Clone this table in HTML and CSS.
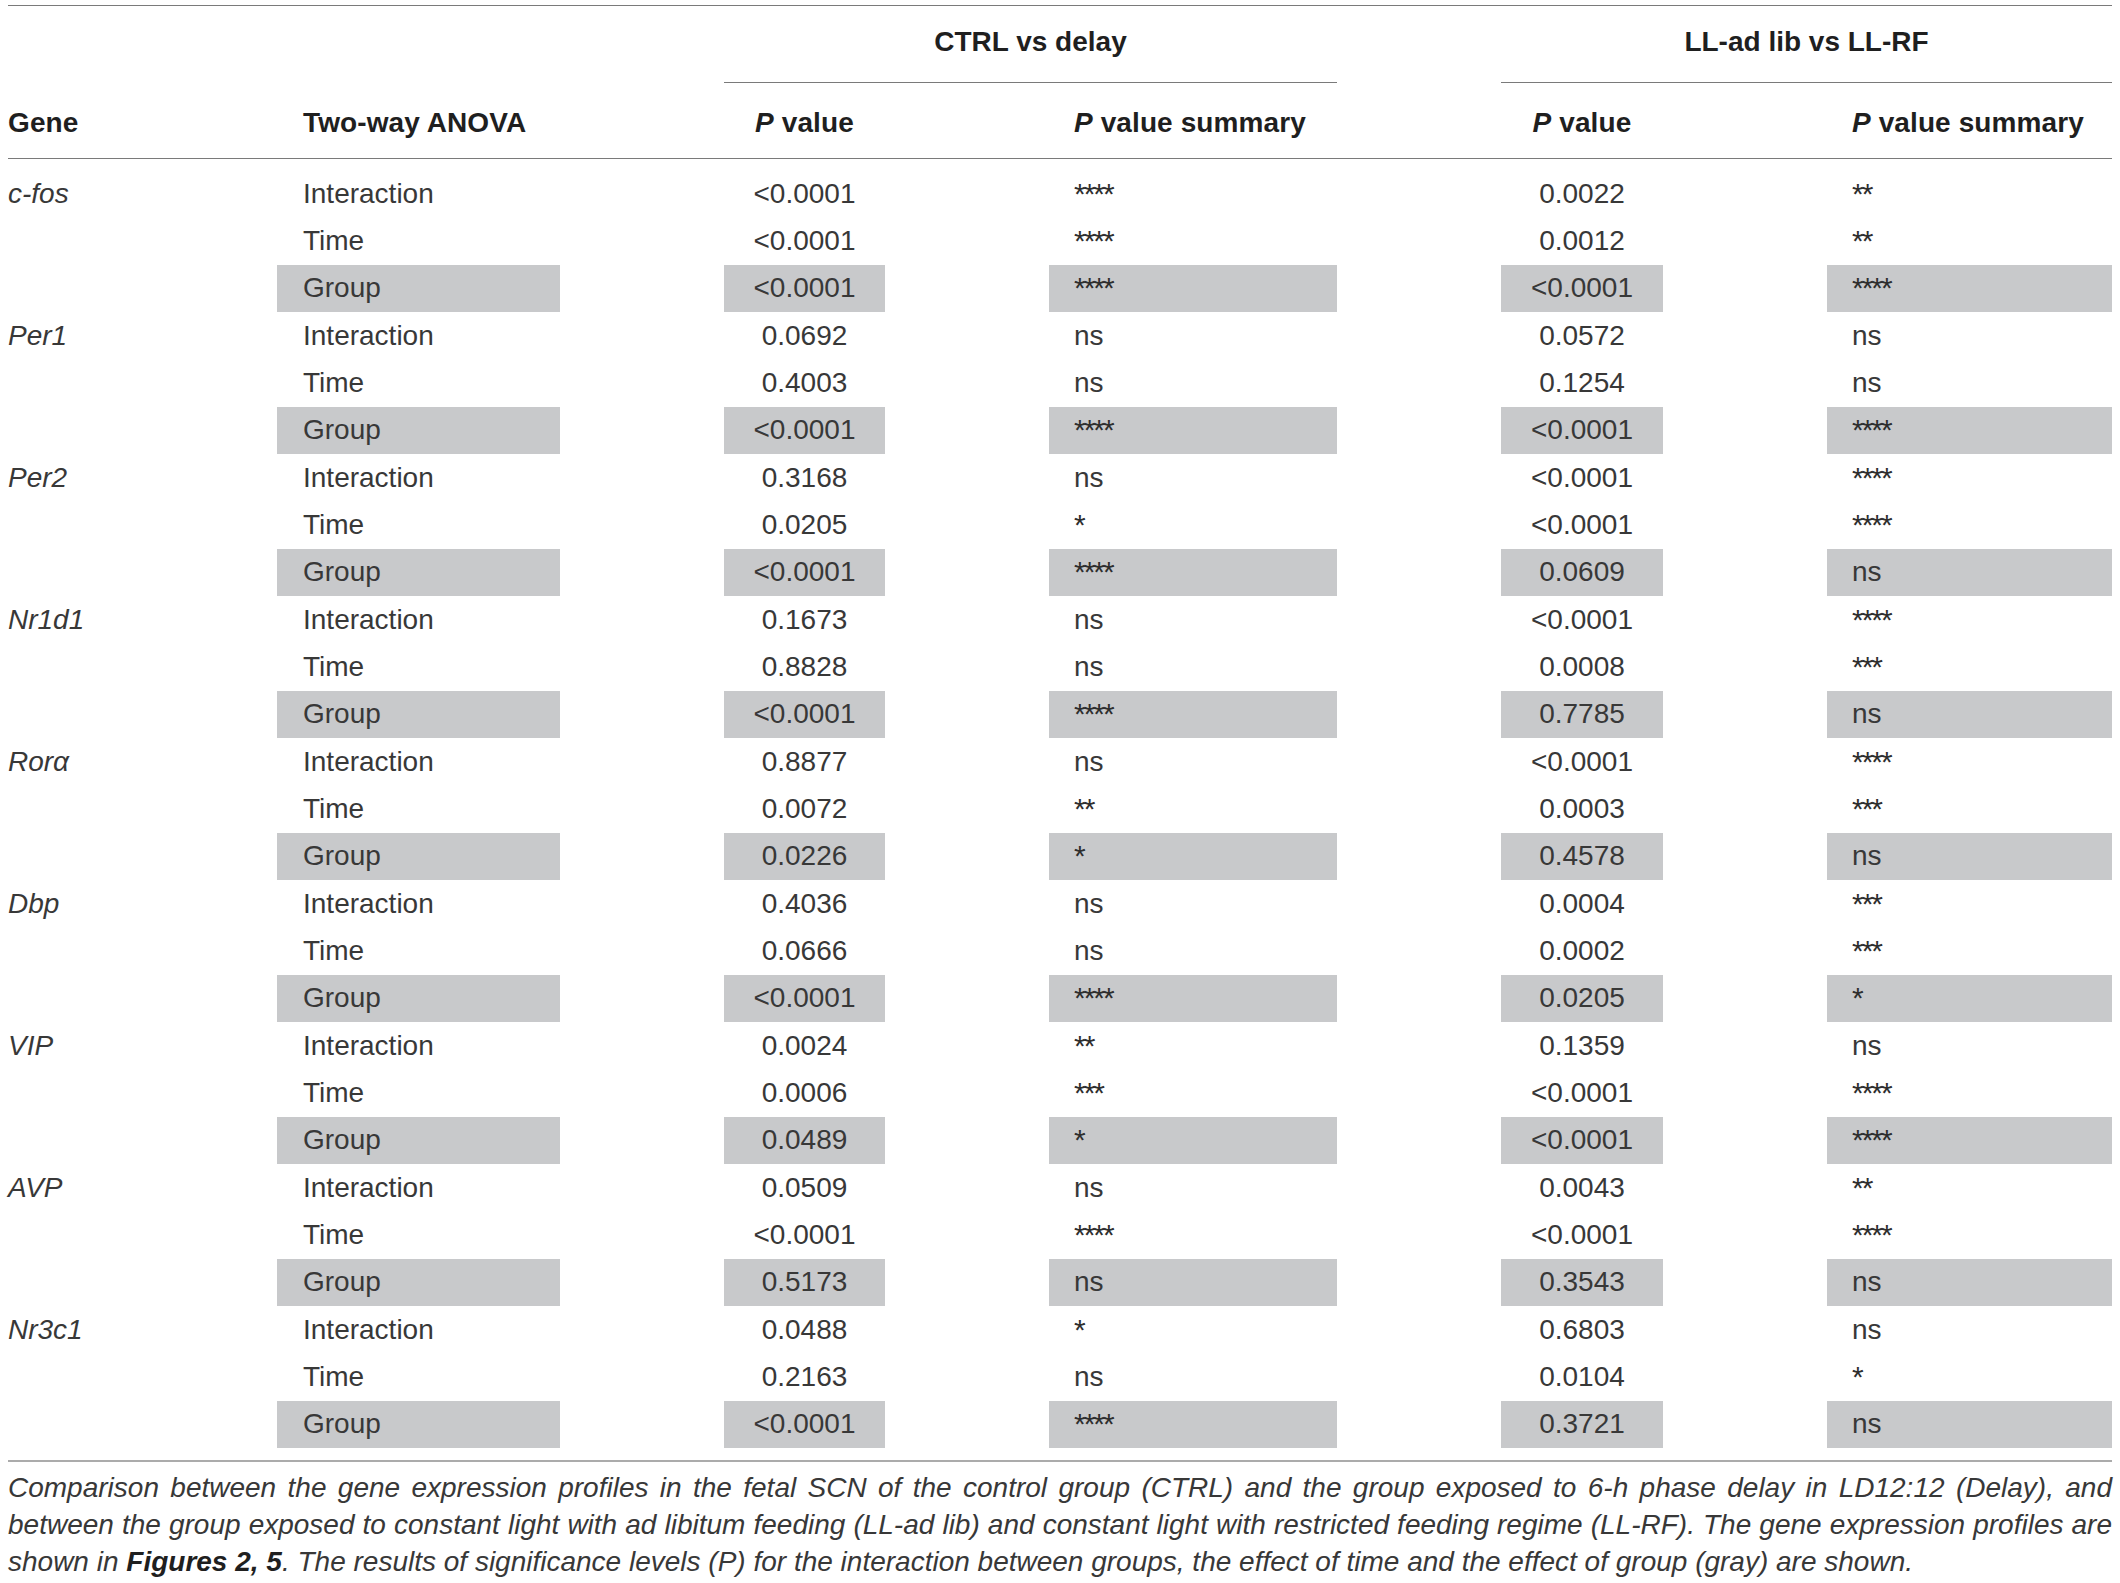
FILE: index.html
```html
<!DOCTYPE html>
<html lang="en">
<head>
<meta charset="utf-8">
<title>Table</title>
<link rel="stylesheet" href="styles.css">
</head>
<body>
<figure class="figure">
  <div class="thead">
    <div class="group-head g1">CTRL vs delay</div>
    <div class="group-head g2">LL-ad lib vs LL-RF</div>
    <div class="col-head h1">Gene</div>
    <div class="col-head h2">Two-way ANOVA</div>
    <div class="col-head h3"><i>P</i> value</div>
    <div class="col-head h4"><i>P</i> value summary</div>
    <div class="col-head h5"><i>P</i> value</div>
    <div class="col-head h6"><i>P</i> value summary</div>
  </div>
  <div class="tbody">
    <div class="row"><div class="c c1"><i>c-fos</i></div><div class="c c2">Interaction</div><div class="c c3">&lt;0.0001</div><div class="c c4"><span class="st">****</span></div><div class="c c5">0.0022</div><div class="c c6"><span class="st">**</span></div></div>
    <div class="row"><div class="c c1"></div><div class="c c2">Time</div><div class="c c3">&lt;0.0001</div><div class="c c4"><span class="st">****</span></div><div class="c c5">0.0012</div><div class="c c6"><span class="st">**</span></div></div>
    <div class="row grp"><div class="c c1"></div><div class="c c2">Group</div><div class="c c3">&lt;0.0001</div><div class="c c4"><span class="st">****</span></div><div class="c c5">&lt;0.0001</div><div class="c c6"><span class="st">****</span></div></div>

    <div class="row"><div class="c c1"><i>Per1</i></div><div class="c c2">Interaction</div><div class="c c3">0.0692</div><div class="c c4">ns</div><div class="c c5">0.0572</div><div class="c c6">ns</div></div>
    <div class="row"><div class="c c1"></div><div class="c c2">Time</div><div class="c c3">0.4003</div><div class="c c4">ns</div><div class="c c5">0.1254</div><div class="c c6">ns</div></div>
    <div class="row grp"><div class="c c1"></div><div class="c c2">Group</div><div class="c c3">&lt;0.0001</div><div class="c c4"><span class="st">****</span></div><div class="c c5">&lt;0.0001</div><div class="c c6"><span class="st">****</span></div></div>

    <div class="row"><div class="c c1"><i>Per2</i></div><div class="c c2">Interaction</div><div class="c c3">0.3168</div><div class="c c4">ns</div><div class="c c5">&lt;0.0001</div><div class="c c6"><span class="st">****</span></div></div>
    <div class="row"><div class="c c1"></div><div class="c c2">Time</div><div class="c c3">0.0205</div><div class="c c4"><span class="st">*</span></div><div class="c c5">&lt;0.0001</div><div class="c c6"><span class="st">****</span></div></div>
    <div class="row grp"><div class="c c1"></div><div class="c c2">Group</div><div class="c c3">&lt;0.0001</div><div class="c c4"><span class="st">****</span></div><div class="c c5">0.0609</div><div class="c c6">ns</div></div>

    <div class="row"><div class="c c1"><i>Nr1d1</i></div><div class="c c2">Interaction</div><div class="c c3">0.1673</div><div class="c c4">ns</div><div class="c c5">&lt;0.0001</div><div class="c c6"><span class="st">****</span></div></div>
    <div class="row"><div class="c c1"></div><div class="c c2">Time</div><div class="c c3">0.8828</div><div class="c c4">ns</div><div class="c c5">0.0008</div><div class="c c6"><span class="st">***</span></div></div>
    <div class="row grp"><div class="c c1"></div><div class="c c2">Group</div><div class="c c3">&lt;0.0001</div><div class="c c4"><span class="st">****</span></div><div class="c c5">0.7785</div><div class="c c6">ns</div></div>

    <div class="row"><div class="c c1"><i>Rorα</i></div><div class="c c2">Interaction</div><div class="c c3">0.8877</div><div class="c c4">ns</div><div class="c c5">&lt;0.0001</div><div class="c c6"><span class="st">****</span></div></div>
    <div class="row"><div class="c c1"></div><div class="c c2">Time</div><div class="c c3">0.0072</div><div class="c c4"><span class="st">**</span></div><div class="c c5">0.0003</div><div class="c c6"><span class="st">***</span></div></div>
    <div class="row grp"><div class="c c1"></div><div class="c c2">Group</div><div class="c c3">0.0226</div><div class="c c4"><span class="st">*</span></div><div class="c c5">0.4578</div><div class="c c6">ns</div></div>

    <div class="row"><div class="c c1"><i>Dbp</i></div><div class="c c2">Interaction</div><div class="c c3">0.4036</div><div class="c c4">ns</div><div class="c c5">0.0004</div><div class="c c6"><span class="st">***</span></div></div>
    <div class="row"><div class="c c1"></div><div class="c c2">Time</div><div class="c c3">0.0666</div><div class="c c4">ns</div><div class="c c5">0.0002</div><div class="c c6"><span class="st">***</span></div></div>
    <div class="row grp"><div class="c c1"></div><div class="c c2">Group</div><div class="c c3">&lt;0.0001</div><div class="c c4"><span class="st">****</span></div><div class="c c5">0.0205</div><div class="c c6"><span class="st">*</span></div></div>

    <div class="row"><div class="c c1"><i>VIP</i></div><div class="c c2">Interaction</div><div class="c c3">0.0024</div><div class="c c4"><span class="st">**</span></div><div class="c c5">0.1359</div><div class="c c6">ns</div></div>
    <div class="row"><div class="c c1"></div><div class="c c2">Time</div><div class="c c3">0.0006</div><div class="c c4"><span class="st">***</span></div><div class="c c5">&lt;0.0001</div><div class="c c6"><span class="st">****</span></div></div>
    <div class="row grp"><div class="c c1"></div><div class="c c2">Group</div><div class="c c3">0.0489</div><div class="c c4"><span class="st">*</span></div><div class="c c5">&lt;0.0001</div><div class="c c6"><span class="st">****</span></div></div>

    <div class="row"><div class="c c1"><i>AVP</i></div><div class="c c2">Interaction</div><div class="c c3">0.0509</div><div class="c c4">ns</div><div class="c c5">0.0043</div><div class="c c6"><span class="st">**</span></div></div>
    <div class="row"><div class="c c1"></div><div class="c c2">Time</div><div class="c c3">&lt;0.0001</div><div class="c c4"><span class="st">****</span></div><div class="c c5">&lt;0.0001</div><div class="c c6"><span class="st">****</span></div></div>
    <div class="row grp"><div class="c c1"></div><div class="c c2">Group</div><div class="c c3">0.5173</div><div class="c c4">ns</div><div class="c c5">0.3543</div><div class="c c6">ns</div></div>

    <div class="row"><div class="c c1"><i>Nr3c1</i></div><div class="c c2">Interaction</div><div class="c c3">0.0488</div><div class="c c4"><span class="st">*</span></div><div class="c c5">0.6803</div><div class="c c6">ns</div></div>
    <div class="row"><div class="c c1"></div><div class="c c2">Time</div><div class="c c3">0.2163</div><div class="c c4">ns</div><div class="c c5">0.0104</div><div class="c c6"><span class="st">*</span></div></div>
    <div class="row grp"><div class="c c1"></div><div class="c c2">Group</div><div class="c c3">&lt;0.0001</div><div class="c c4"><span class="st">****</span></div><div class="c c5">0.3721</div><div class="c c6">ns</div></div>
  </div>
  <figcaption class="caption">Comparison between the gene expression profiles in the fetal SCN of the control group (CTRL) and the group exposed to 6-h phase delay in LD12:12 (Delay), and between the group exposed to constant light with ad libitum feeding (LL-ad lib) and constant light with restricted feeding regime (LL-RF). The gene expression profiles are shown in <b>Figures 2, 5</b>. The results of significance levels (P) for the interaction between groups, the effect of time and the effect of group (gray) are shown.</figcaption>
</figure>
</body>
</html>
```

FILE: styles.css
```css
:root {
  --cols: 105px 283px 161px 288px 162px 285px;
  --gap: 164px;
  --rule: #7a7a7a;
}

html, body {
  background: #ffffff;
}

body {
  margin: 0;
  padding: 5px 8px 0;
  font-family: "Liberation Sans", Arial, sans-serif;
  color: #383838;
}

.figure {
  margin: 0;
  width: 2104px;
}

.thead,
.tbody {
  display: grid;
  grid-template-columns: var(--cols);
  column-gap: var(--gap);
}

.thead {
  border-top: 1px solid var(--rule);
  border-bottom: 1px solid var(--rule);
}

.group-head {
  grid-row: 1;
  font-size: 28px;
  line-height: 32px;
  font-weight: bold;
  color: #1f1f1f;
  text-align: center;
  padding: 20px 0 24px;
  border-bottom: 1px solid var(--rule);
}

.g1 { grid-column: 3 / 5; }
.g2 { grid-column: 5 / 7; }

.col-head {
  grid-row: 2;
  font-size: 28px;
  line-height: 32px;
  font-weight: bold;
  color: #1f1f1f;
  padding: 24px 0 19px;
  letter-spacing: 0.1px;
}

.h1 { grid-column: 1; }
.h2 { grid-column: 2; padding-left: 26px; }
.h3 { grid-column: 3; text-align: center; }
.h4 { grid-column: 4; padding-left: 25px; }
.h5 { grid-column: 5; text-align: center; }
.h6 { grid-column: 6; padding-left: 25px; }

.tbody {
  grid-auto-rows: 47.333px;
  padding: 11px 0 12px;
  border-bottom: 2px solid #ababab;
}

.row {
  display: contents;
}

.c {
  display: flex;
  align-items: center;
  font-size: 28px;
  line-height: 32px;
  white-space: nowrap;
}

.c2 { padding-left: 26px; }
.c3, .c5 { justify-content: center; }
.c4, .c6 { padding-left: 25px; }

.grp .c2,
.grp .c3,
.grp .c4,
.grp .c5,
.grp .c6 {
  background: #c8c9cb;
}

.st {
  font-size: 30px;
  letter-spacing: -2px;
  color: #2e2e2e;
}

.caption {
  margin: 7px 0 0;
  font-size: 28px;
  line-height: 37px;
  font-style: italic;
  text-align: justify;
  color: #383838;
}

.caption b {
  color: #1f1f1f;
}
```
